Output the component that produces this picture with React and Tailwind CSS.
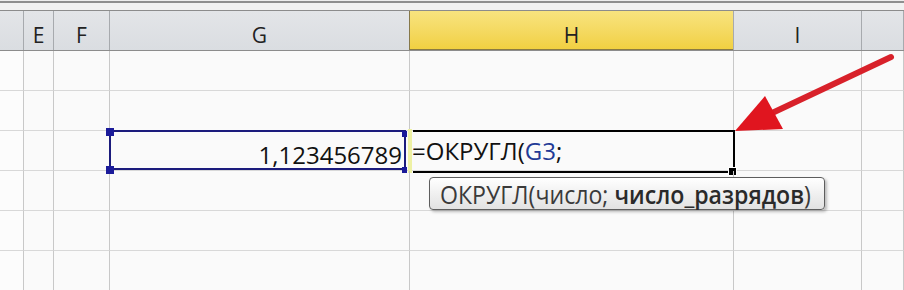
import React from "react";

const COLS = "grid grid-cols-[24px_30px_56px_300px_324px_128px_42px]";
const FONT = { fontFamily: '"Open Sans", "Noto Sans", sans-serif' };

function HeaderCell({ label, yellow, darkRight }) {
  return (
    <div
      className={
        (yellow
          ? "bg-linear-to-b from-[#f8e37e] to-[#f1d03e] shadow-[inset_0_-1px_0_#8a7a42] "
          : "bg-linear-to-b from-[#e3e5e8] to-[#dadde1] ") +
        (darkRight ? "border-r border-r-[#86784a] " : "border-r border-r-[#a7aaae] ") +
        "flex items-center justify-center pt-[9px] text-[21px] leading-none text-[#222]"
      }
    >
      {label}
    </div>
  );
}

function BodyRow({ special }) {
  const cell = "border-r border-b border-r-[#c8c8c8] border-b-[#d8d8d8]";
  return (
    <div className={COLS + " h-[40px]"}>
      <div className={cell + " bg-[#fcfcfc]"} />
      <div className={cell} />
      <div className={cell} />
      <div className={cell + " relative flex items-center justify-end pr-[7px] pt-[8px]"}>
        {special && (
          <>
            <span className="text-[24px] leading-none text-[#111]">1,123456789</span>
            <div className="absolute top-[-1px] left-[-1px] right-[3px] bottom-0 border-2 border-[#1b1b7c]" />
            <div className="absolute left-[-4px] top-[-3px] w-[8px] h-[8px] bg-[#1b1b9a]" />
            <div className="absolute left-[-4px] bottom-[-4px] w-[8px] h-[8px] bg-[#1b1b9a]" />
            <div className="absolute right-[2px] top-[0px] w-[5px] h-[6px] bg-[#1b1b9a]" />
            <div className="absolute right-[2px] bottom-[-3px] w-[5px] h-[6px] bg-[#1b1b9a]" />
          </>
        )}
      </div>
      <div className={cell + " relative flex items-center pl-[2px] pt-[1px]"}>
        {special && (
          <>
            <div className="absolute top-[-1px] left-[3px] right-[-2px] bottom-[-3px] border-2 border-l-0 border-black" />
            <div className="absolute top-[-2px] left-[-2px] w-[4px] bottom-[-3px] bg-[#eef1a4]" />
            <div className="absolute right-[-4px] bottom-[-6px] w-[9px] h-[9px] bg-black border border-white" />
            <span className="relative text-[24px] leading-none text-[#111]">
              =ОКРУГЛ(<span className="text-[#223a96]">G3</span>;
            </span>
          </>
        )}
      </div>
      <div className={cell} />
      <div className={cell} />
    </div>
  );
}

export default function App() {
  return (
    <div className="relative w-[904px] h-[290px] overflow-hidden bg-[#fafafa]" style={FONT}>
      <div className="h-[10px] flex flex-col">
        <div className="h-[1px] bg-[#eeeeee]" />
        <div className="h-[2px] bg-[#8f8f8f]" />
        <div className="flex-1 bg-[#f2f2f2]" />
      </div>
      <div className={COLS + " h-[41px] border-t border-b border-[#8c8c8c]"}>
        <HeaderCell label="" />
        <HeaderCell label="E" />
        <HeaderCell label="F" />
        <HeaderCell label="G" darkRight />
        <HeaderCell label="H" yellow />
        <HeaderCell label="I" />
        <HeaderCell label="" />
      </div>
      <BodyRow />
      <BodyRow />
      <BodyRow special />
      <BodyRow />
      <BodyRow />
      <BodyRow />

      <div className="absolute left-[429px] top-[177px] w-[396px] h-[33px] rounded-[4px] border border-[#5e5e5e] bg-linear-to-b from-white to-[#e2e2e2] shadow-[2px_2px_3px_rgba(0,0,0,0.25)] flex items-center pl-[10px] pt-[1px]">
        <span className="inline-block origin-left scale-x-[0.925] text-[25px] leading-none text-[#3a3a3a] whitespace-nowrap">
          ОКРУГЛ(число; <span className="font-semibold text-[#2a2a2a]">число_разрядов</span>)
        </span>
      </div>

      <svg className="absolute left-0 top-0 pointer-events-none" width="904" height="290" viewBox="0 0 904 290">
        <line x1="891" y1="57" x2="770" y2="114" stroke="#d8212a" strokeWidth="6" strokeLinecap="round" />
        <polygon points="735,131 765,96 783,129" fill="#e0151f" />
      </svg>
    </div>
  );
}
